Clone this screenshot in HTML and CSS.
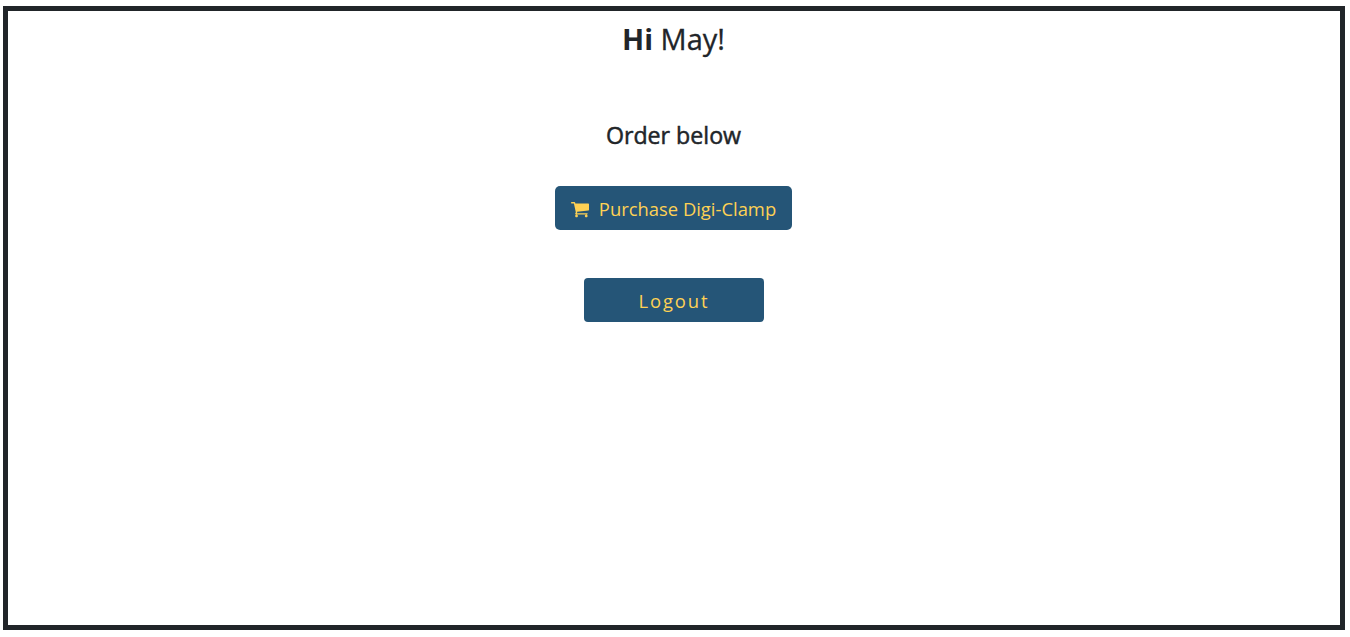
FILE: index.html
```html
<!DOCTYPE html>
<html lang="en">
<head>
<meta charset="utf-8">
<title>Order</title>
<link rel="stylesheet" href="styles.css">
</head>
<body>
<main class="frame">
  <h1 class="greeting"><b>Hi</b> May!</h1>
  <h2 class="subtitle">Order below</h2>
  <button class="btn purchase" type="button">
    <svg class="cart" viewBox="0 0 1664 1792" aria-hidden="true"><path fill="currentColor" d="M640 1536q0 52-38 90t-90 38-90-38-38-90 38-90 90-38 90 38 38 90zm896 0q0 52-38 90t-90 38-90-38-38-90 38-90 90-38 90 38 38 90zm128-1088v512q0 24-16.500 42.500t-40.500 21.500l-1044 122q13 60 13 70 0 16-24 64h920q26 0 45 19t19 45-19 45-45 19h-1024q-26 0-45-19t-19-45q0-11 8-31.500t16-36 21.500-40 15.500-29.500l-177-823h-204q-26 0-45-19t-19-45 19-45 45-19h256q16 0 28.500 6.500t19.500 15.500 13 24.500 8 26 5.500 29.500 4.500 26h1201q26 0 45 19t19 45z"/></svg>
    <span class="purchase-label">Purchase Digi-Clamp</span>
  </button>
  <button class="btn logout" type="button"><span class="logout-label">Logout</span></button>
</main>
</body>
</html>
```
FILE: styles.css
```css
body {
  margin: 0;
  padding: 6px 5px 7px 3px;
  height: 637px;
  box-sizing: border-box;
  background: #fff;
  color: #212529;
  font-family: "Open Sans", "Noto Sans", sans-serif;
}
.frame {
  height: 624px;
  box-sizing: border-box;
  border: 5px solid #212529;
  display: flex;
  flex-direction: column;
  align-items: center;
}
.greeting {
  margin: 10px 1px 0 0;
  font-size: 29px;
  line-height: 36px;
  font-weight: 500;
  -webkit-text-stroke: 0.3px currentColor;
}
.greeting b { font-weight: 700; -webkit-text-stroke: 0; }
.subtitle {
  margin: 63px 1px 0 0;
  font-size: 23.200px;
  line-height: 30px;
  font-weight: 500;
  -webkit-text-stroke: 0.500px currentColor;
}
.btn {
  display: flex;
  align-items: center;
  justify-content: center;
  height: 44px;
  padding: 2px 0 0;
  border: 0;
  border-radius: 4px;
  background: #255577;
  color: #fed154;
  font: 400 18.400px/24px "Open Sans", "Noto Sans", sans-serif;
}
.purchase {
  width: 237px;
  margin: 36px 1px 0 0;
  gap: 10px;
  border-radius: 5px;
}
.cart { width: 18px; height: 20px; }
.logout {
  width: 180px;
  margin-top: 48px;
  letter-spacing: 1.900px;
}
```
